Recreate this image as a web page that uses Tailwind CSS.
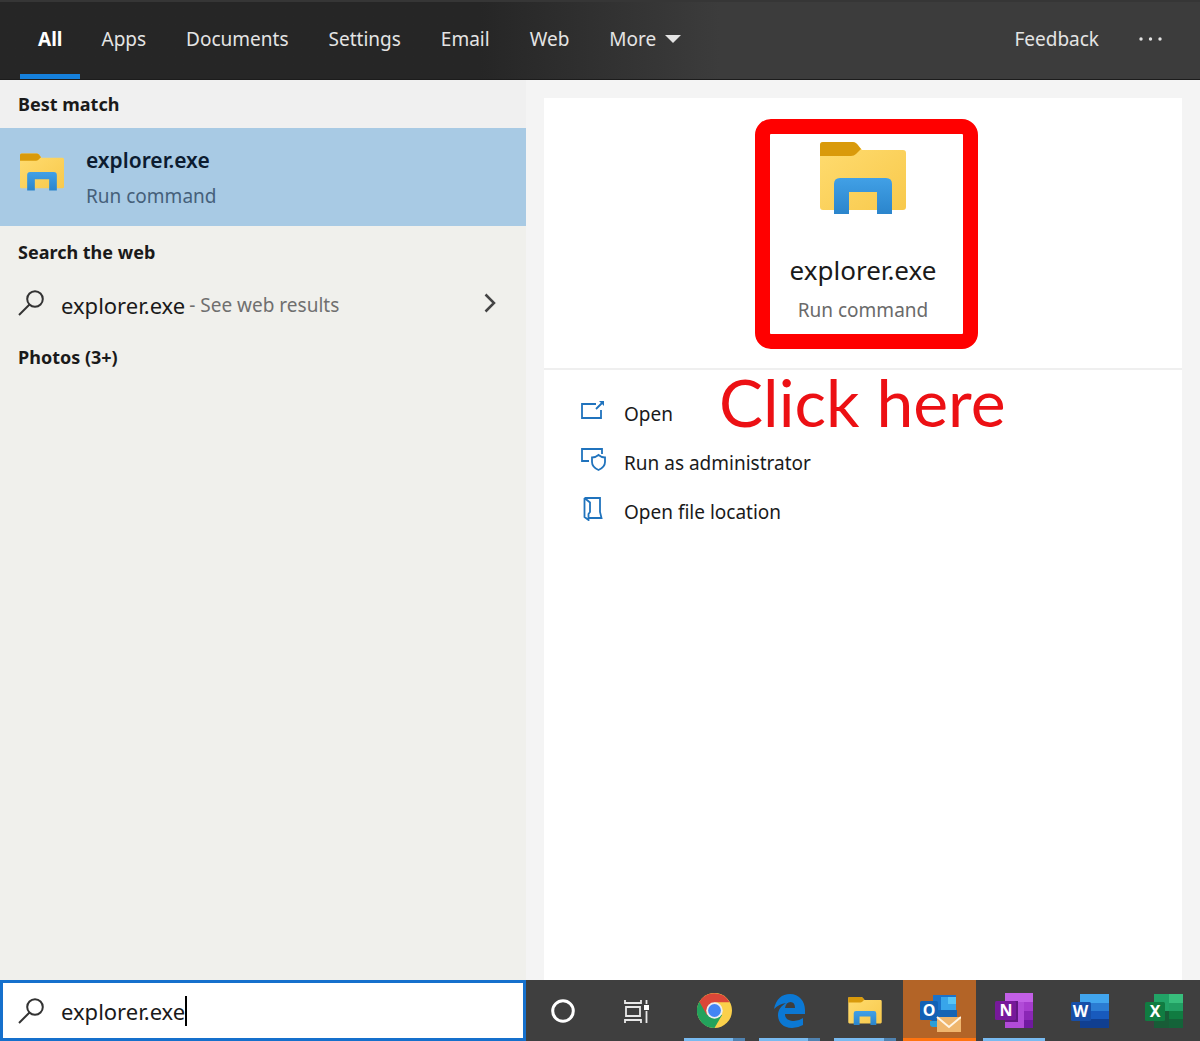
<!DOCTYPE html>
<html lang="en">
<head>
    <meta charset="UTF-8">
    <meta name="viewport" content="width=device-width, initial-scale=1.0">
    <title>Search - explorer.exe</title>

    <!-- Tailwind CSS -->
    <script src="https://cdn.jsdelivr.net/npm/@tailwindcss/browser@4"></script>
</head>
<body class="min-h-screen flex flex-col bg-[#f4f4f4] font-['Noto_Sans',sans-serif] text-[19px] leading-7 text-[#1a1a1a]">

    <!-- Shared icons -->
    <svg class="absolute w-0 h-0" aria-hidden="true">
        <defs>
            <linearGradient id="folderBody" x1="0" y1="0" x2="1" y2="1">
                <stop offset="0" stop-color="#ffdc70" />
                <stop offset="1" stop-color="#f8c94c" />
            </linearGradient>
            <linearGradient id="folderClip" x1="0" y1="0" x2="0" y2="1">
                <stop offset="0" stop-color="#41a0e6" />
                <stop offset="1" stop-color="#2b85cc" />
            </linearGradient>
            <symbol id="folder" viewBox="0 0 86 72">
                <path d="M0 3Q0 0 3 0H33Q35 0 37 2L42 8H83Q86 8 86 11V65Q86 68 83 68H3Q0 68 0 65Z" fill="url(#folderBody)" />
                <path d="M0 3Q0 0 3 0H33Q35 0 37 2L41 7L36 12Q34 14 31 14H0Z" fill="#d99a0b" />
                <path d="M14 72V42Q14 36 20 36H66Q72 36 72 42V72H57V50H29V72Z" fill="url(#folderClip)" />
            </symbol>
            <symbol id="search" viewBox="0 0 26 26">
                <circle cx="17" cy="9" r="7.8" fill="none" stroke="currentColor" stroke-width="2" />
                <path d="M11.5 14.5L1 25" fill="none" stroke="currentColor" stroke-width="2" />
            </symbol>
        </defs>
    </svg>

    <!-- Header -->
    <header class="h-20 shrink-0 flex items-stretch justify-between bg-linear-to-r from-[#262626] from-40% to-[#3c3c3c] to-60% border-t-2 border-b border-t-[#363636] border-b-[#1c1c1c] text-[#e4e4e4]">
        <nav class="flex pl-5">
            <button class="px-[18px] mr-px border-b-5 border-[#1580dc] pt-px font-bold text-white">All</button>
            <button class="px-5 pb-1">Apps</button>
            <button class="px-5 pb-1">Documents</button>
            <button class="px-5 pb-1">Settings</button>
            <button class="px-5 pb-1">Email</button>
            <button class="px-5 pb-1">Web</button>
            <button class="px-5 pb-1 flex items-center gap-[9px]">More
                <svg class="w-4 h-2" viewBox="0 0 16 8"><path d="M0 0H16L8 8Z" fill="currentColor" /></svg>
            </button>
        </nav>
        <div class="flex pr-[17px]">
            <button class="px-5 pb-1">Feedback</button>
            <button class="px-5 pb-1" aria-label="Options">
                <svg class="w-6 h-1" viewBox="0 0 24 4" fill="currentColor"><circle cx="2" cy="2" r="1.7" /><circle cx="11.5" cy="2" r="1.7" /><circle cx="21" cy="2" r="1.7" /></svg>
            </button>
        </div>
    </header>

    <main class="flex-1 flex">
        <!-- Results list -->
        <section class="w-[526px] shrink-0 bg-[#f0f0ec]">
            <h2 class="h-12 px-[18px] flex items-center bg-[#f0f0f0] text-lg font-bold">Best match</h2>
            <button class="w-full h-[98px] pt-0.5 px-5 flex items-center gap-[22px] bg-[#a8cae4] text-left">
                <svg class="w-11 h-[38px] mb-3"><use href="#folder" /></svg>
                <span class="flex flex-col gap-2">
                    <span class="font-semibold text-[21px] text-[#0c1c30]">explorer.exe</span>
                    <span class="text-[#45607a]">Run command</span>
                </span>
            </button>
            <h2 class="h-[52px] px-[18px] flex items-center text-lg font-bold">Search the web</h2>
            <button class="w-full h-[53px] px-[18px] flex items-center text-left">
                <svg class="w-[26px] h-[26px] mr-[17px] mb-1 text-[#333]"><use href="#search" /></svg>
                <span class="text-[22px]">explorer.exe</span>
                <span class="ml-1 text-[#6f6f6f]">- See web results</span>
                <svg class="w-3 h-5 ml-auto mr-3 mb-1" viewBox="0 0 12 20"><path d="M1.5 1.5L10 10L1.5 18.5" fill="none" stroke="#444" stroke-width="2.5" /></svg>
            </button>
            <h2 class="h-[52px] px-[18px] flex items-center text-lg font-bold">Photos (3+)</h2>
        </section>

        <!-- Details pane -->
        <section class="flex-1 flex pt-[18px] px-[18px]">
            <div class="flex-1 bg-white">
                <div class="h-[272px] flex justify-center items-start pt-[21px] pl-[6px] border-b-2 border-[#efefef]">
                    <div class="w-[223px] h-[230px] border-[15px] border-[#ff0000] rounded-2xl">
                        <div class="flex flex-col items-center pt-2 pr-[6px]">
                            <svg class="w-[86px] h-[72px]"><use href="#folder" /></svg>
                            <h1 class="mt-10 text-[26px] leading-8">explorer.exe</h1>
                            <p class="mt-[10px] text-[#6a6a6a]">Run command</p>
                        </div>
                    </div>
                </div>
                <div class="relative">
                    <ul class="pt-[19px] px-9">
                        <li>
                            <button class="h-[49px] flex items-center gap-[18px]">
                                <svg class="w-[26px] h-6 mb-[6px]" viewBox="0 0 26 24" fill="none" stroke="#2073bd" stroke-width="1.8">
                                    <path d="M16 5H2V19H21V11M16 10L23 3" />
                                    <path d="M19 2H24V7Z" fill="#2073bd" stroke="none" />
                                </svg>
                                Open
                            </button>
                        </li>
                        <li>
                            <button class="h-[49px] flex items-center gap-[18px]">
                                <svg class="w-[26px] h-6 mb-[6px]" viewBox="0 0 26 24" fill="none" stroke="#2073bd" stroke-width="1.8">
                                    <path d="M9 13H2V1H22V6" />
                                    <path d="M18.5 7Q15.5 9.5 12 9.5V14Q12 19 18.5 22Q25 19 25 14V9.5Q21.5 9.5 18.5 7Z" />
                                </svg>
                                Run as administrator
                            </button>
                        </li>
                        <li>
                            <button class="h-[49px] flex items-center gap-[18px]">
                                <svg class="w-[26px] h-6 mb-[6px]" viewBox="0 0 26 24" fill="none" stroke="#2073bd" stroke-width="1.8">
                                    <path d="M4.5 1H20V15L21.5 21H9M4.5 1V20L8.5 23V17L10 15V5.5L4.5 1" />
                                </svg>
                                Open file location
                            </button>
                        </li>
                    </ul>
                    <p class="absolute left-1/2 top-0 -ml-36 whitespace-nowrap font-[Lato,sans-serif] text-[66px] leading-16 text-[#ec1014]">Click here</p>
                </div>
            </div>
        </section>
    </main>

    <!-- Taskbar -->
    <footer class="h-[61px] shrink-0 flex bg-[#3f3f3f]">
        <label class="w-[526px] shrink-0 flex items-center pl-[15px] bg-white border-3 border-[#1570cc]">
            <svg class="w-[26px] h-[26px] mr-[17px] text-[#333]"><use href="#search" /></svg>
            <input type="text" value="explorer.exe" aria-label="Search" class="field-sizing-content max-w-[440px] h-[30px] border-r-2 border-black text-[22px] outline-none caret-transparent">
        </label>
        <div class="flex-1 flex">
            <button class="w-[74px] flex items-center justify-center" aria-label="Cortana">
                <svg class="w-6 h-6" viewBox="0 0 24 24"><circle cx="12" cy="12" r="10.3" fill="none" stroke="#fff" stroke-width="3" /></svg>
            </button>
            <button class="w-[73px] mr-1 flex items-center justify-center" aria-label="Task View">
                <svg class="w-[26px] h-6" viewBox="0 0 26 24" fill="none" stroke="#e8e8e8" stroke-width="1.8">
                    <path d="M1 1V4H17V1M2 8H16V17H2ZM1 24V21H17V24M22.5 1V5M22.5 12V24" />
                    <path d="M20 6H25V11H20Z" fill="#fff" stroke="none" />
                </svg>
            </button>
            <button class="relative w-[75px] flex items-center justify-center" aria-label="Chrome">
                <svg class="w-[35px] h-[35px]" viewBox="0 0 36 36">
                    <circle cx="18" cy="18" r="18" fill="#fbd04b" />
                    <path d="M18 18L2.4 9A18 18 0 0 0 18 36L25.8 22.5Z" fill="#23a25c" />
                    <path d="M18 18L10.2 22.5L2.4 9A18 18 0 0 1 33.6 9.5H18Z" fill="#db4738" />
                    <circle cx="18" cy="18" r="8.5" fill="#eee" />
                    <circle cx="18" cy="18" r="6.6" fill="#4285f4" />
                </svg>
                <span class="absolute inset-x-[7px] bottom-0 h-[3px] bg-linear-to-r from-[#78baf0] from-80% to-[#4f82b0] to-80%"></span>
            </button>
            <button class="relative w-[75px] flex items-center justify-center" aria-label="Edge">
                <svg class="w-[31px] h-[34px]" viewBox="0 0 31 34">
                    <path d="M0 15C2 5 8 0 16 0C25 0 31 7 31 16V20H11C11 25 15 27 20 27Q25 27 29 24V31Q24 34 18 34C9 34 4 28 4 21C4 16 7 12 12 9Q5 10 0 15ZM11 14H21Q21 8 16.5 8Q12 8 11 14Z" fill="#0b78d4" fill-rule="evenodd" />
                </svg>
                <span class="absolute inset-x-[7px] bottom-0 h-[3px] bg-linear-to-r from-[#78baf0] from-80% to-[#4f82b0] to-80%"></span>
            </button>
            <button class="relative w-[76px] flex items-center justify-center" aria-label="File Explorer">
                <svg class="w-[34px] h-7"><use href="#folder" /></svg>
                <span class="absolute inset-x-[7px] bottom-0 h-[3px] bg-linear-to-r from-[#78baf0] from-80% to-[#4f82b0] to-80%"></span>
            </button>
            <button class="relative w-[73px] flex items-center justify-center bg-[#b36427]" aria-label="Outlook">
                <svg class="w-[42px] h-10 mt-1" viewBox="0 0 42 40">
                    <path d="M14 2H37V19H14Z" fill="#1b72ca" />
                    <path d="M22 4H37V18H22Z" fill="#38a5ea" />
                    <path d="M29 4H37V11H29Z" fill="#58c5f5" />
                    <path d="M11 17H38V31H13Z" fill="#1664b4" />
                    <path d="M11 28H22V34H14Q11 34 11 31Z" fill="#2b9ed7" />
                    <rect x="1" y="8" width="18" height="19" rx="1.5" fill="#1261b5" />
                    <text x="10" y="23" text-anchor="middle" font-family="Noto Sans" font-weight="bold" font-size="16" fill="#fff">O</text>
                    <path d="M18 24H42V39H18Z" fill="#efb66e" />
                    <path d="M18 24L30 34L42 24" fill="none" stroke="#fff5e5" stroke-width="2" />
                </svg>
                <span class="absolute inset-x-0 bottom-0 h-[3px] bg-[#ff7410]"></span>
            </button>
            <button class="relative w-[76px] flex items-center justify-center" aria-label="OneNote">
                <svg class="w-[38px] h-[35px]" viewBox="0 0 38 35">
                    <path d="M10 0H38V35H10Z" fill="#b14bd8" />
                    <path d="M10 0H38V9H10Z" fill="#c25fe6" />
                    <path d="M29 9H38V18H29Z" fill="#a63cce" />
                    <path d="M29 18H38V27H29Z" fill="#8b27b6" />
                    <path d="M29 27H38V35H29Z" fill="#7019a0" />
                    <path d="M10 8H23V29H10Z" fill="#611780" />
                    <rect x="0" y="8" width="21" height="19" rx="1.5" fill="#77199a" />
                    <text x="11" y="23" text-anchor="middle" font-family="Noto Sans" font-weight="bold" font-size="16" fill="#fff">N</text>
                </svg>
                <span class="absolute inset-x-[7px] bottom-0 h-[3px] bg-[#78baf0]"></span>
            </button>
            <button class="w-[75px] flex items-center justify-center" aria-label="Word">
                <svg class="w-[38px] h-[34px]" viewBox="0 0 38 34">
                    <path d="M9 0H38V9H9Z" fill="#41a5ee" />
                    <path d="M9 9H38V17H9Z" fill="#2b7cd3" />
                    <path d="M9 17H38V25H9Z" fill="#185abd" />
                    <path d="M9 25H38V34H9Z" fill="#103f91" />
                    <rect x="0" y="8" width="20" height="19" rx="1.5" fill="#174fa8" />
                    <text x="9.5" y="23" text-anchor="middle" font-family="Noto Sans" font-weight="bold" font-size="16" fill="#fff">W</text>
                </svg>
            </button>
            <button class="flex-1 flex items-center justify-center" aria-label="Excel">
                <svg class="w-[38px] h-[34px]" viewBox="0 0 38 34">
                    <path d="M9 0H24V17H9Z" fill="#21a366" />
                    <path d="M24 0H38V9H24Z" fill="#38be7c" />
                    <path d="M24 9H38V17H24Z" fill="#219e62" />
                    <path d="M9 17H24V34H9Z" fill="#185c37" />
                    <path d="M24 17H38V25H24Z" fill="#107c41" />
                    <path d="M24 25H38V34H24Z" fill="#146339" />
                    <rect x="0" y="8" width="20" height="19" rx="1.5" fill="#107c41" />
                    <text x="10" y="23" text-anchor="middle" font-family="Noto Sans" font-weight="bold" font-size="16" fill="#fff">X</text>
                </svg>
            </button>
        </div>
    </footer>

</body>
</html>
